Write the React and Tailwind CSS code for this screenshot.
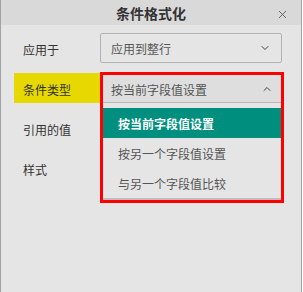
import React from 'react';
import { X, ChevronDown, ChevronUp } from 'lucide-react';

const FONT = { fontFamily: '"Noto Sans CJK SC", "Noto Sans", sans-serif' };

const OPTIONS = ['按当前字段值设置', '按另一个字段值设置', '与另一个字段值比较'];

function Row({ label, highlight, children }) {
  return (
    <div className="flex h-[30px] items-stretch">
      <div className={`w-[86px] ml-[13px] pl-[9px] pt-[3px] flex items-center text-[12px] text-[#333] ${highlight ? 'bg-[#e6d800]' : ''}`}>
        {label}
      </div>
      <div className="relative w-[182px]">{children}</div>
    </div>
  );
}

export default function App() {
  return (
    <div style={FONT} className="w-[302px] h-[292px] bg-[#e5e5e5] border-l border-r border-[#a3a3a3] flex flex-col">
      {/* Header */}
      <div className="relative h-[25px] bg-[#d9d9d9] rounded-br-[3px] flex items-center justify-center pt-[2px]">
        <span className="text-[14px] font-bold text-[#333]">条件格式化</span>
        <X size={13} strokeWidth={1.6} className="absolute right-[12px] top-[8px] text-[#555]" />
      </div>

      <div className="flex flex-col gap-[10px] pt-[8px]">
        <Row label="应用于">
          <div className="h-full border border-[#b3b3b3] rounded-[2px] flex items-center justify-between pl-[10px] pr-[10px] text-[12px] text-[#555]">
            <span className="pt-[2px]">应用到整行</span>
            <ChevronDown size={12} strokeWidth={2} className="text-[#444]" />
          </div>
        </Row>

        <Row label="条件类型" highlight>
          <div className="absolute left-0 top-[-1px] w-[184px] h-[131px] border-[3px] border-[#ff0000] z-10 flex flex-col">
            <div className="h-[28px] shrink-0 bg-[#dedede] border-b border-[#b8b8b8] flex items-center justify-between pl-[8px] pr-[8px] text-[12px] text-[#555]">
              <span className="pt-[2px]">按当前字段值设置</span>
              <ChevronUp size={12} strokeWidth={2} className="text-[#444]" />
            </div>
            <div className="mt-[5px] flex flex-col bg-[#e5e5e5] border-b-2 border-[#bdbdbd]">
              {OPTIONS.map((o, i) => (
                <div
                  key={o}
                  className={`h-[30px] flex items-center pl-[15px] pt-[1px] text-[12px] ${i === 0 ? 'bg-[#008f7e] text-white font-bold' : 'text-[#555]'}`}
                >
                  {o}
                </div>
              ))}
            </div>
          </div>
        </Row>

        <Row label="引用的值" />
        <Row label="样式" />
      </div>
    </div>
  );
}
